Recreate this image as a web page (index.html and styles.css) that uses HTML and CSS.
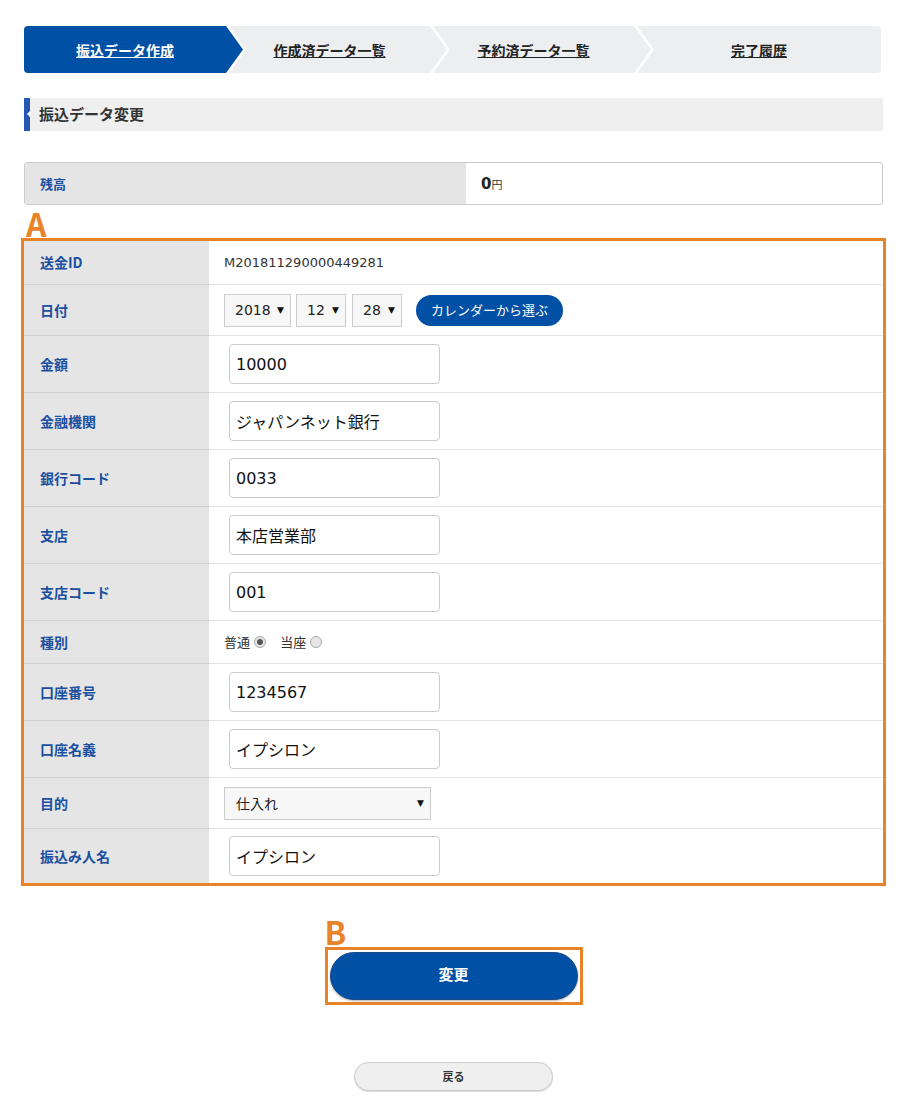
FILE: index.html
```html
<!DOCTYPE html>
<html lang="ja">
<head>
  <meta charset="UTF-8" />
  <title>振込データ変更</title>
  <link rel="stylesheet" href="styles.css">
</head>
<body>

  <div class="page">
    <ol class="steps">
      <li class="step active"><a href="#">振込データ作成</a></li>
      <li class="step"><a href="#">作成済データ一覧</a></li>
      <li class="step"><a href="#">予約済データ一覧</a></li>
      <li class="step last"><a href="#">完了履歴</a></li>
    </ol>

    <h2 class="section-title">振込データ変更</h2>

    <table class="balance">
      <tr>
        <th>残高</th>
        <td><strong>0</strong><span class="yen">円</span></td>
      </tr>
    </table>

    <div class="mark mark-a">A</div>
    <div class="frame">
      <table class="form-table">
        <tr class="row-id">
          <th>送金ID</th>
          <td>M201811290000449281</td>
        </tr>
        <tr class="row-select">
          <th>日付</th>
          <td>
            <div class="date-group">
              <span class="select w-year"><select><option>2018</option></select></span>
              <span class="select w-small"><select><option>12</option></select></span>
              <span class="select w-small"><select><option>28</option></select></span>
              <button type="button" class="btn-calendar">カレンダーから選ぶ</button>
            </div>
          </td>
        </tr>
        <tr>
          <th>金額</th>
          <td><input type="text" value="10000" /></td>
        </tr>
        <tr>
          <th>金融機関</th>
          <td><input type="text" value="ジャパンネット銀行" /></td>
        </tr>
        <tr>
          <th>銀行コード</th>
          <td><input type="text" value="0033" /></td>
        </tr>
        <tr>
          <th>支店</th>
          <td><input type="text" value="本店営業部" /></td>
        </tr>
        <tr>
          <th>支店コード</th>
          <td><input type="text" value="001" /></td>
        </tr>
        <tr class="row-radio">
          <th>種別</th>
          <td>
            <label class="radio">普通<input type="radio" name="kind" checked /></label>
            <label class="radio">当座<input type="radio" name="kind" /></label>
          </td>
        </tr>
        <tr>
          <th>口座番号</th>
          <td><input type="text" value="1234567" /></td>
        </tr>
        <tr>
          <th>口座名義</th>
          <td><input type="text" value="イプシロン" /></td>
        </tr>
        <tr class="row-select">
          <th>目的</th>
          <td><span class="select w-wide"><select><option>仕入れ</option></select></span></td>
        </tr>
        <tr class="row-last">
          <th>振込み人名</th>
          <td><input type="text" value="イプシロン" /></td>
        </tr>
      </table>
    </div>

    <div class="submit-area">
      <div class="mark mark-b">B</div>
      <div class="frame-b">
        <button type="submit" class="btn-primary">変更</button>
      </div>
    </div>

    <div class="back">
      <button type="button" class="btn-back">戻る</button>
    </div>
  </div>

</body>
</html>
```

FILE: styles.css
```css
body {
  margin: 0;
  padding: 0;
  font-family: "DejaVu Sans", "Noto Sans CJK JP", sans-serif;
  color: #333;
  background: #fff;
}

.page {
  padding: 26px 27px 20px 24px;
}

/* step bar */
.steps {
  display: flex;
  list-style: none;
  margin: 0 2px 0 0;
  padding: 0;
  height: 47px;
  border-radius: 4px;
  overflow: hidden;
}

.step {
  width: 218px;
  margin-left: -14px;
  padding-right: 17px;
  box-sizing: border-box;
  background: #edeef0;
  display: flex;
  align-items: center;
  justify-content: center;
  clip-path: polygon(0 0, calc(100% - 17px) 0, 100% 50%, calc(100% - 17px) 100%, 0 100%, 17px 50%);
}

.step:first-child {
  width: 219px;
  margin-left: 0;
  clip-path: polygon(0 0, calc(100% - 17px) 0, 100% 50%, calc(100% - 17px) 100%, 0 100%);
}

.step.last {
  flex: 1;
  padding-right: 0;
  clip-path: polygon(0 0, 100% 0, 100% 100%, 0 100%, 17px 50%);
}

.step a {
  font-size: 14px;
  font-weight: bold;
  color: #222;
  text-decoration: underline;
  font-family: "Noto Sans CJK JP", sans-serif;
}

.step.active {
  background: #0050a5;
}

.step.active a {
  color: #fff;
}

/* section heading */
.section-title {
  position: relative;
  margin: 25px 0 0;
  height: 33px;
  line-height: 31px;
  padding-left: 9px;
  background: #efefef;
  border-left: 6px solid #2358b5;
  font-size: 15px;
  font-weight: bold;
  color: #333;
  font-family: "Noto Sans CJK JP", sans-serif;
}

.section-title::before {
  content: "";
  position: absolute;
  left: -3px;
  top: 13px;
  border-top: 3px solid transparent;
  border-bottom: 3px solid transparent;
  border-right: 3px solid #fff;
}

/* balance */
.balance {
  width: 100%;
  margin-top: 31px;
  border-collapse: separate;
  border-spacing: 0;
  border: 1px solid #ccc;
  border-radius: 3px;
}

.balance th,
.balance td {
  height: 41px;
  padding: 0 0 0 15px;
  text-align: left;
  line-height: 1;
}

.balance th {
  width: 426px;
  background: #e5e5e5;
  font-size: 13px;
  color: #1b4f9f;
  font-family: "Noto Sans CJK JP", sans-serif;
}

.balance td strong {
  font-size: 15px;
  color: #222;
}

.balance .yen {
  font-size: 11px;
  color: #333;
}

/* orange markers */
.mark {
  font-size: 32px;
  font-weight: bold;
  color: #e8832a;
  font-family: "Noto Sans CJK JP", sans-serif;
}

.mark-a {
  height: 33px;
  line-height: 36px;
  padding-left: 2px;
}

.mark-b {
  height: 28px;
  line-height: 24px;
}

.frame {
  margin: 0 -3px;
  border: 3px solid #e8832a;
}

/* form table */
.form-table {
  width: 100%;
  border-collapse: collapse;
}

.form-table th,
.form-table td {
  height: 56px;
  padding: 0;
  text-align: left;
  line-height: 1.2;
  border-bottom: 1px solid #e3e3e3;
}

.form-table th {
  width: 169px;
  padding-left: 16px;
  background: #e5e5e5;
  border-bottom-color: #cfcfcf;
  font-size: 14px;
  color: #1b4f9f;
  font-family: "Noto Sans CJK JP", sans-serif;
}

.form-table td {
  padding-left: 15px;
  font-size: 13px;
  color: #333;
}

.form-table .row-id th,
.form-table .row-id td {
  height: 43px;
}

.form-table .row-select th,
.form-table .row-select td {
  height: 50px;
}

.form-table .row-radio th,
.form-table .row-radio td {
  height: 42px;
}

.form-table .row-last th,
.form-table .row-last td {
  height: 54px;
  border-bottom: none;
}

.form-table input[type="text"] {
  display: block;
  margin-left: 5px;
  width: 211px;
  height: 40px;
  box-sizing: border-box;
  padding: 0 6px;
  border: 1px solid #ccc;
  border-radius: 4px;
  font-size: 16px;
  color: #111;
  font-family: "DejaVu Sans", "Noto Sans CJK JP", sans-serif;
}

/* selects */
.date-group {
  display: flex;
  align-items: center;
}

.select {
  position: relative;
  display: inline-block;
  margin-right: 5px;
}

.select select {
  appearance: none;
  -webkit-appearance: none;
  display: block;
  height: 33px;
  width: 100%;
  padding: 0 0 0 10px;
  border: 1px solid #ccc;
  border-radius: 0;
  background: #f7f7f7;
  font-size: 14px;
  color: #222;
  font-family: "DejaVu Sans", "Noto Sans CJK JP", sans-serif;
}

.select::after {
  content: "▼";
  position: absolute;
  right: 7px;
  top: 11px;
  font-size: 9px;
  color: #111;
  pointer-events: none;
}

.w-year { width: 67px; }
.w-small { width: 50px; margin-right: 6px; }
.w-wide { width: 207px; }

.w-wide select {
  padding-left: 11px;
  font-family: "Noto Sans CJK JP", sans-serif;
}

.btn-calendar {
  margin-left: 8px;
  height: 31px;
  width: 147px;
  border: none;
  border-radius: 16px;
  background: #0050a5;
  color: #fff;
  font-size: 13px;
  font-family: "Noto Sans CJK JP", sans-serif;
  padding: 0 0 2px;
}

/* radios */
.radio {
  display: inline-flex;
  align-items: center;
  margin-right: 10px;
  font-size: 13px;
  font-family: "Noto Sans CJK JP", sans-serif;
}

.radio input {
  appearance: none;
  -webkit-appearance: none;
  position: relative;
  width: 12px;
  height: 12px;
  margin: 0 0 0 4px;
  border: 1px solid #aaa;
  border-radius: 50%;
  background: #e6e6e6;
}

.radio input:checked::after {
  content: "";
  position: absolute;
  left: 2px;
  top: 2px;
  width: 6px;
  height: 6px;
  border-radius: 50%;
  background: #555;
}

/* buttons */
.submit-area {
  width: 258px;
  margin: 33px auto 0;
}

.frame-b {
  border: 3px solid #e8832a;
  padding: 2px;
}

.btn-primary {
  display: block;
  width: 100%;
  height: 48px;
  padding: 0 0 5px;
  border: 1px solid #1c4a86;
  border-radius: 24px;
  background: #0050a5;
  color: #fff;
  font-size: 15px;
  font-weight: bold;
  font-family: "Noto Sans CJK JP", sans-serif;
  box-shadow: 0 1px 2px rgba(0, 0, 0, 0.3);
}

.back {
  display: flex;
  justify-content: center;
  margin-top: 57px;
}

.btn-back {
  width: 199px;
  height: 29px;
  padding: 0 0 2px;
  border: 1px solid #ccc;
  border-radius: 15px;
  background: #efefef;
  color: #333;
  font-size: 11px;
  font-weight: bold;
  font-family: "Noto Sans CJK JP", sans-serif;
  box-shadow: 0 1px 1px rgba(0, 0, 0, 0.15);
}
```
